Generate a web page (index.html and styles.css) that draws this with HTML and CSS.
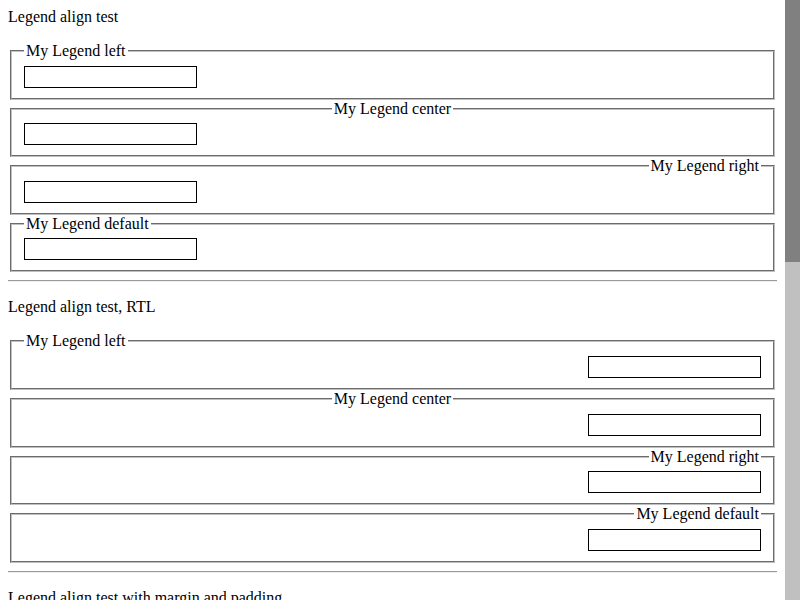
FILE: index.html
```html
<!DOCTYPE html>
<html lang="en">
<head>
    <meta charset="UTF-8">
    <title>Legend align test</title>
    <link rel="stylesheet" href="styles.css">
</head>
<body>
    <div class="page">
        <p class="heading first">Legend align test</p>

        <fieldset>
            <legend class="legend-left">My Legend left</legend>
            <input type="text">
        </fieldset>
        <fieldset>
            <legend class="legend-center">My Legend center</legend>
            <input type="text">
        </fieldset>
        <fieldset>
            <legend class="legend-right">My Legend right</legend>
            <input type="text">
        </fieldset>
        <fieldset>
            <legend>My Legend default</legend>
            <input type="text">
        </fieldset>

        <hr>

        <p class="heading">Legend align test, RTL</p>

        <div dir="rtl">
            <fieldset>
                <legend class="legend-left">My Legend left</legend>
                <input type="text">
            </fieldset>
            <fieldset>
                <legend class="legend-center">My Legend center</legend>
                <input type="text">
            </fieldset>
            <fieldset>
                <legend class="legend-right">My Legend right</legend>
                <input type="text">
            </fieldset>
            <fieldset>
                <legend>My Legend default</legend>
                <input type="text">
            </fieldset>
        </div>

        <hr>

        <p class="heading">Legend align test with margin and padding</p>
    </div>

    <div class="scrollbar">
        <div class="scrollbar-thumb"></div>
    </div>
</body>
</html>
```

FILE: styles.css
```css
html {
    overflow: hidden;
}

body {
    margin: 0;
    font-family: "Liberation Serif", "Times New Roman", serif;
    font-size: 16px;
    color: #000;
    background: #fff;
}

.page {
    width: 769px;
    padding: 8px;
}

.heading {
    margin: 16px 0;
}

.heading.first {
    margin-top: 0;
}

fieldset {
    margin: 0 2px;
    padding: 0.35em 0.75em 0.625em;
    border: 2px groove #c0c0c0;
}

legend {
    padding: 0 2px;
}

.legend-left {
    margin-left: 0;
    margin-right: auto;
}

.legend-center {
    margin-left: auto;
    margin-right: auto;
}

.legend-right {
    margin-left: auto;
    margin-right: 0;
}

input {
    box-sizing: border-box;
    width: 173px;
    height: 22px;
    margin: 0;
    border: 1px solid #000;
    background: #fff;
    font: inherit;
    vertical-align: top;
}

hr {
    margin: 8px 0;
    border: 0;
    border-top: 1px solid #9a9a9a;
    border-bottom: 1px solid #eee;
}

/* drawn scrollbar, the page is longer than the window */
.scrollbar {
    position: fixed;
    top: 0;
    right: 0;
    width: 15px;
    height: 100%;
    background: #c0c0c0;
}

.scrollbar-thumb {
    height: 262px;
    background: #808080;
}
```
